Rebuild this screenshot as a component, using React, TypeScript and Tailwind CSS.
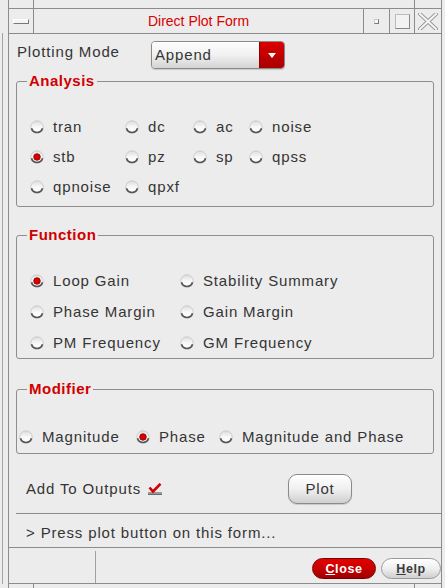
import React from "react";

type Opt = { label: string; on?: boolean };

function Radio({ on }: { on?: boolean }) {
  return (
    <svg width="14" height="14" viewBox="0 0 14 14" className="shrink-0">
      <defs>
        <linearGradient id="rg" x1="0" y1="0" x2="0" y2="1">
          <stop offset="0" stopColor="#dcdcdc" />
          <stop offset="0.5" stopColor="#f8f8f8" />
          <stop offset="1" stopColor="#ffffff" />
        </linearGradient>
      </defs>
      <circle cx="7" cy="7" r="6.2" fill="url(#rg)" stroke="#c4c4c4" strokeWidth="0.8" />
      <path d="M1.5 8.3 A5.7 5.7 0 0 0 12.5 8.3" fill="none" stroke="#555" strokeWidth="1.7" />
      {on && <circle cx="7" cy="7" r="3.3" fill="#d80000" stroke="#8a0000" strokeWidth="0.8" />}
    </svg>
  );
}

function Item({ label, on }: Opt) {
  return (
    <div className="flex items-center">
      <Radio on={on} />
      <span className="ml-[9px] whitespace-nowrap">{label}</span>
    </div>
  );
}

function Group({ title, className, children }: { title: string; className: string; children: React.ReactNode }) {
  return (
    <fieldset className={"mx-[7px] border border-[#8e8e8e] rounded-[3px] " + className}>
      <legend className="ml-[10px] px-[2px] font-bold text-[#d00000] tracking-[0.5px]">{title}</legend>
      {children}
    </fieldset>
  );
}

const analysis: Opt[] = [
  { label: "tran" }, { label: "dc" }, { label: "ac" }, { label: "noise" },
  { label: "stb", on: true }, { label: "pz" }, { label: "sp" }, { label: "qpss" },
  { label: "qpnoise" }, { label: "qpxf" },
];

const functions: Opt[] = [
  { label: "Loop Gain", on: true }, { label: "Stability Summary" },
  { label: "Phase Margin" }, { label: "Gain Margin" },
  { label: "PM Frequency" }, { label: "GM Frequency" },
];

function FrameTicks() {
  return (
    <div className="h-[8px] flex shrink-0">
      <div className="w-[8px]" />
      <div className="w-[434px] flex border-l border-r border-[#8c8c8c]">
        <div className="w-[25px] border-r border-[#8c8c8c]" />
        <div className="flex-1" />
        <div className="w-[27px] border-l border-[#8c8c8c]" />
      </div>
    </div>
  );
}

export default function App() {
  return (
    <div className="w-[445px] h-[588px] bg-[#ececec] flex flex-col overflow-hidden font-['Liberation_Sans',Arial,sans-serif] text-[#353535] text-[15px] tracking-[0.85px] leading-[18px]">
      <FrameTicks />

      <div className="h-[576px] flex shrink-0">
        <div className="w-[8px] flex flex-col">
          <div className="h-[25px]" />
          <div className="flex-1 ml-[2px] border-l border-[#a3a3a3]" />
        </div>

        <div className="w-[434px] flex flex-col border border-[#8c8c8c]">
          {/* title bar */}
          <div className="h-[25px] flex border-b border-[#8c8c8c] shrink-0">
            <div className="w-[25px] border-r border-[#8c8c8c] flex items-center justify-center">
              <div className="w-[16px] h-[5px] bg-[#f4f4f4] border border-t-white border-l-white border-r-[#777] border-b-[#777]" />
            </div>
            <div className="flex-1 flex items-center justify-center text-[14px] tracking-normal text-[#d80000]">
              Direct Plot Form
            </div>
            <div className="w-[26px] border-l border-[#8c8c8c] flex items-center justify-center">
              <div className="w-[5px] h-[5px] bg-[#fafafa] border border-t-[#ccc] border-l-[#ccc] border-r-[#777] border-b-[#777]" />
            </div>
            <div className="w-[25px] border-l border-[#8c8c8c] flex items-center justify-center">
              <div className="w-[15px] h-[15px] border border-t-[#bbb] border-l-[#bbb] border-r-[#888] border-b-[#888] bg-[#f2f2f2]" />
            </div>
            <div className="w-[27px] border-l border-[#8c8c8c] flex items-center justify-center">
              <svg width="20" height="17" viewBox="0 0 20 17">
                <path d="M2 1 L18 16 M18 1 L2 16" stroke="#9a9a9a" strokeWidth="4" strokeLinecap="square" />
                <path d="M2 1 L18 16 M18 1 L2 16" stroke="#f4f4f4" strokeWidth="2" strokeLinecap="square" />
              </svg>
            </div>
          </div>

          {/* form body */}
          <div className="h-[514px] border-b border-[#8c8c8c] flex flex-col shrink-0">
            <div className="flex pt-[7px] pl-[8px]">
              <div className="w-[134px] mt-[2px]">Plotting Mode</div>
              <div className="w-[134px] h-[28px] flex rounded-[4px] border border-[#8a8a8a] overflow-hidden shadow-[0_1px_1px_rgba(0,0,0,0.15)]">
                <div className="flex-1 flex items-center pl-[3px] bg-linear-to-b from-[#fdfdfd] via-[#f1f1f1] to-[#d3d3d3]">
                  Append
                </div>
                <div className="w-[25px] flex items-center justify-center border-l border-[#8e0000] bg-linear-to-b from-[#dc0000] to-[#a80000]">
                  <svg width="8" height="5" viewBox="0 0 8 5">
                    <path d="M0 0 H8 L4 5 Z" fill="#ffffff" />
                  </svg>
                </div>
              </div>
            </div>

            <Group title="Analysis" className="mt-[3px] pb-[4px]">
              <div className="grid grid-cols-[95px_68px_56px_1fr] auto-rows-[30px] items-center pl-[13px] pt-[22px]">
                {analysis.map((o) => (
                  <Item key={o.label} {...o} />
                ))}
              </div>
            </Group>

            <Group title="Function" className="mt-[19px]">
              <div className="grid grid-cols-[150px_1fr] auto-rows-[31px] items-center pl-[13px] pt-[21px]">
                {functions.map((o) => (
                  <Item key={o.label} {...o} />
                ))}
              </div>
            </Group>

            <Group title="Modifier" className="mt-[21px] pb-[1px]">
              <div className="flex h-[30px] items-center pl-[2px] mt-[24px]">
                <div className="w-[117px]"><Item label="Magnitude" /></div>
                <div className="w-[83px]"><Item label="Phase" on /></div>
                <Item label="Magnitude and Phase" />
              </div>
            </Group>

            <div className="mt-[20px] h-[30px] flex items-center pl-[17px]">
              <div className="w-[262px] flex items-center">
                <span>Add To Outputs</span>
                <svg width="14" height="12" viewBox="0 0 14 12" className="ml-[7px]">
                  <rect x="0" y="9" width="14" height="3" fill="#9a9a9a" />
                  <rect x="0" y="11" width="14" height="1" fill="#6a6a6a" />
                  <path d="M1.5 4.5 L5 8.5 L12.5 0.8" fill="none" stroke="#d40000" strokeWidth="2.6" />
                </svg>
              </div>
              <div className="w-[64px] h-[30px] flex items-center justify-center rounded-[9px] border border-[#8a8a8a] bg-linear-to-b from-[#ffffff] via-[#f0f0f0] to-[#d0d0d0] shadow-[0_1px_1px_rgba(0,0,0,0.15)]">
                Plot
              </div>
            </div>

            <div className="mt-[9px] ml-[7px] border-t border-[#8c8c8c]" />
            <div className="pt-[10px] pl-[17px]">&gt; Press plot button on this form...</div>
          </div>

          {/* bottom buttons */}
          <div className="h-[35px] flex shrink-0">
            <div className="w-[87px] mt-[3px] border-r border-[#a0a0a0]" />
            <div className="flex-1" />
            <div className="mt-[10px] w-[64px] h-[21px] flex items-center justify-center rounded-full border border-[#7a0000] bg-linear-to-b from-[#e40000] via-[#c80000] to-[#a00000] text-white text-[12.5px] font-bold tracking-[0.6px]">
              <span><span className="underline">C</span>lose</span>
            </div>
            <div className="mt-[10px] ml-[5px] w-[60px] h-[21px] flex items-center justify-center rounded-full border border-[#9a9a9a] bg-linear-to-b from-[#ffffff] via-[#efefef] to-[#cfcfcf] text-[#3a3a3a] text-[12.5px] font-bold tracking-[0.6px]">
              <span><span className="underline">H</span>elp</span>
            </div>
          </div>
        </div>
      </div>

      <FrameTicks />
    </div>
  );
}
